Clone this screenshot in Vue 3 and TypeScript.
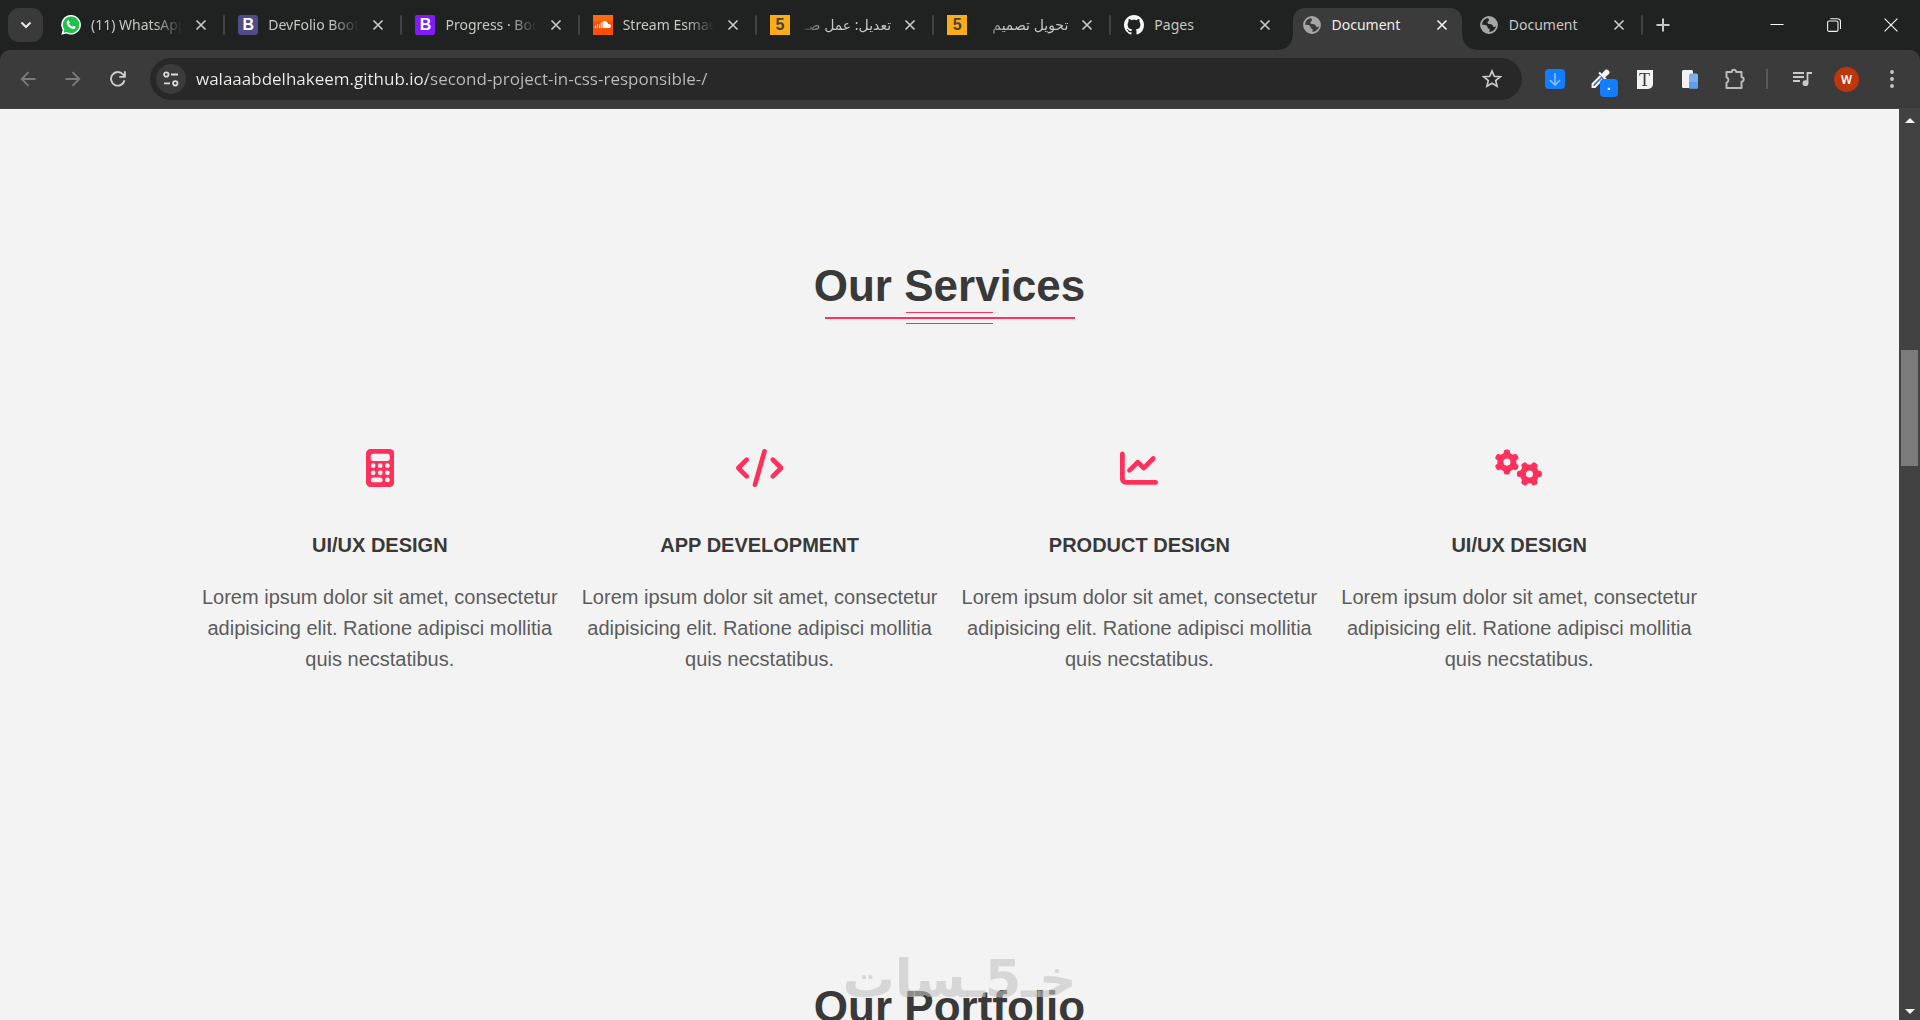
<script setup lang="ts">
import { ref } from 'vue'

type Favicon = 'whatsapp' | 'bootstrap' | 'bootstrap-docs' | 'soundcloud' | 'five' | 'github' | 'globe'

interface Tab {
  title: string
  icon: Favicon
  rtl?: boolean
  fade?: boolean
}

interface Service {
  title: string
  icon: 'calculator' | 'code' | 'chart' | 'gears'
}

const tabs: Tab[] = [
  { title: '(11) WhatsApp', icon: 'whatsapp', fade: true },
  { title: 'DevFolio Boot', icon: 'bootstrap', fade: true },
  { title: 'Progress · Boo', icon: 'bootstrap-docs', fade: true },
  { title: 'Stream Esmae', icon: 'soundcloud', fade: true },
  { title: 'تعديل: عمل صـ', icon: 'five', rtl: true, fade: true },
  { title: 'تحويل تصميم', icon: 'five', rtl: true, fade: true },
  { title: 'Pages', icon: 'github' },
  { title: 'Document', icon: 'globe' },
  { title: 'Document', icon: 'globe' },
]
const activeTab = ref(7)
const address = ref('walaaabdelhakeem.github.io/second-project-in-css-responsible-/')

const services: Service[] = [
  { title: 'UI/UX DESIGN', icon: 'calculator' },
  { title: 'APP DEVELOPMENT', icon: 'code' },
  { title: 'PRODUCT DESIGN', icon: 'chart' },
  { title: 'UI/UX DESIGN', icon: 'gears' },
]
const blurb =
  'Lorem ipsum dolor sit amet, consectetur adipisicing elit. Ratione adipisci mollitia quis necstatibus.'

const gear =
  'M308.5 135.3c7.1-6.3 9.9-16.2 6.2-25c-2.3-5.3-4.8-10.5-7.6-15.5L304 89.4c-3-5-6.3-9.9-9.8-14.6c-5.7-7.6-15.7-10.1-24.7-7.1l-28.2 9.3c-10.7-8.8-23-16-36.2-20.9L199 27.1c-1.9-9.3-9.1-16.7-18.5-17.8C173.9 8.4 167.2 8 160.4 8h-.7c-6.8 0-13.5 .4-20.1 1.2c-9.4 1.1-16.6 8.6-18.5 17.8L115 56.1c-13.3 5-25.5 12.1-36.2 20.9L50.5 67.8c-9-3-19-.5-24.7 7.1c-3.5 4.7-6.8 9.6-9.9 14.6l-3 5.3c-2.8 5-5.3 10.2-7.6 15.6c-3.7 8.7-.9 18.6 6.2 25l22.2 19.8C32.6 161.9 32 168.9 32 176s.6 14.1 1.7 20.9L11.5 216.7c-7.1 6.3-9.9 16.2-6.2 25c2.3 5.3 4.8 10.5 7.6 15.6l3 5.2c3 5.1 6.3 9.9 9.9 14.6c5.7 7.6 15.7 10.1 24.7 7.1l28.2-9.3c10.7 8.8 23 16 36.2 20.9l6.1 29.1c1.9 9.3 9.1 16.7 18.5 17.8c6.7 .8 13.5 1.2 20.4 1.2s13.7-.4 20.4-1.2c9.4-1.1 16.6-8.6 18.5-17.8l6.1-29.1c13.3-5 25.5-12.1 36.2-20.9l28.2 9.3c9 3 19 .5 24.7-7.1c3.5-4.7 6.8-9.5 9.8-14.6l3.1-5.4c2.8-5 5.3-10.2 7.6-15.5c3.7-8.7 .9-18.6-6.2-25l-22.2-19.8c1.1-6.8 1.7-13.8 1.7-20.9s-.6-14.1-1.7-20.9l22.2-19.8zM112 176a48 48 0 1 1 96 0 48 48 0 1 1 -96 0z'
</script>

<template>
  <div class="browser">
    <header class="tabstrip">
      <button class="tab-search" aria-label="Search tabs">
        <svg width="12" height="12" viewBox="0 0 12 12"><path d="M1.500 3.500 6 8l4.500-4.500" fill="none" stroke="#e8e6e3" stroke-width="2.200" /></svg>
      </button>

      <nav class="tabs" aria-label="Tabs">
        <div
          v-for="(tab, i) in tabs"
          :key="i"
          class="tab"
          :class="{ active: i === activeTab, divided: i !== activeTab && i !== activeTab - 1 }"
        >
          <button class="tab-main" @click="activeTab = i">
            <svg v-if="tab.icon === 'whatsapp'" class="favicon" viewBox="0 0 20 20">
              <path d="M10 0a10 9.800 0 1 1-4.700 18.500L.300 19.800l1.400-4.900A9.800 9.800 0 0 1 10 0z" fill="#fff" />
              <path d="M10 1.500a8.300 8.300 0 1 1-4.200 15.400l-3.300.900.900-3.200A8.300 8.300 0 0 1 10 1.500z" fill="#1fc04b" />
              <path d="M6.900 5.500c.400-.300.900-.200 1.100.200l.700 1.600c.100.300 0 .600-.700 1.300.700 1.500 1.800 2.500 3.300 3.100.700-.900.900-1.100 1.300-1l1.700.900c.500.300.200 1.300-.300 1.800-2.800 2.200-8.900-2.400-8.300-6.300.1-.700.700-1.300 1.200-1.600z" fill="#fff" />
            </svg>
            <span v-else-if="tab.icon === 'bootstrap'" class="favicon badge violet-grey">B</span>
            <span v-else-if="tab.icon === 'bootstrap-docs'" class="favicon badge violet">B</span>
            <svg v-else-if="tab.icon === 'soundcloud'" class="favicon" viewBox="0 0 20 20">
              <rect width="20" height="20" fill="#ff4e08" />
              <path d="M0 0h20v6H0z" fill="#ff6a10" />
              <path d="M2.500 10.500v2.500M4.500 9v4M6.500 9.500v3.500M8.300 7.500V13" stroke="#fff" stroke-width="1.100" />
              <path d="M9.500 13V6.600c2.400-1.500 5.200-.200 5.500 2.500 3.600-.5 3.900 3.900.900 3.900z" fill="#fff" />
            </svg>
            <span v-else-if="tab.icon === 'five'" class="favicon badge amber">5</span>
            <svg v-else-if="tab.icon === 'github'" class="favicon" viewBox="0 0 16 16">
              <path fill="#f6f6f6" d="M8 0C3.580 0 0 3.580 0 8c0 3.540 2.290 6.530 5.470 7.590.4.070.550-.170.550-.380 0-.190-.010-.820-.010-1.490-2.010.370-2.530-.490-2.690-.940-.090-.230-.480-.940-.820-1.130-.280-.150-.680-.520-.010-.530.630-.010 1.080.580 1.230.820.720 1.210 1.870.870 2.330.660.070-.520.280-.870.510-1.070-1.780-.2-3.640-.890-3.640-3.950 0-.870.310-1.590.820-2.150-.080-.2-.360-1.020.080-2.120 0 0 .670-.210 2.200.820.640-.180 1.320-.270 2-.270s1.360.090 2 .270c1.530-1.040 2.200-.820 2.200-.820.440 1.100.160 1.920.080 2.120.510.560.820 1.270.820 2.150 0 3.070-1.870 3.750-3.650 3.950.290.250.540.730.540 1.480 0 1.070-.010 1.930-.010 2.200 0 .210.150.460.550.380A8.010 8.010 0 0 0 16 8c0-4.420-3.580-8-8-8z" />
            </svg>
            <svg v-else class="favicon" viewBox="0 0 20 20">
              <circle cx="10" cy="10" r="8" fill="none" stroke="#a9a7a4" stroke-width="1.800" />
              <path d="M2.500 9.500c2.500.2 4.500.5 5.500 1.500s.200 2 1.500 2.500 1.700 1.500.500 4.500C5 18 1.500 14 2.500 9.500zM9.500 2c4-.5 7.500 2.500 8.200 6.500-.500 3-2 4-3 3.500-1.200-.500-.500-2-2-2.500S9 9.500 8.500 8 9.700 6.500 10 5.500 8.500 3.500 9.500 2z" fill="#a3a6a8" />
            </svg>
            <span class="tab-title" :class="{ fade: tab.fade }" :dir="tab.rtl ? 'rtl' : 'ltr'">{{ tab.title }}</span>
          </button>
          <button class="tab-close" aria-label="Close tab">
            <svg width="12" height="12" viewBox="0 0 12 12"><path d="m1.500 1.500 9 9m0-9-9 9" stroke="currentColor" stroke-width="1.700" /></svg>
          </button>
        </div>
      </nav>

      <button class="new-tab" aria-label="New tab">
        <svg width="14" height="14" viewBox="0 0 14 14"><path d="M7 .500v13M.500 7h13" stroke="#c9c7c4" stroke-width="2" /></svg>
      </button>

      <div class="window-controls">
        <button aria-label="Minimize">
          <svg width="14" height="14" viewBox="0 0 14 14"><path d="M.500 6.500h13" stroke="#fff" stroke-width="1" /></svg>
        </button>
        <button aria-label="Restore">
          <svg width="14" height="14" viewBox="0 0 14 14" fill="none" stroke="#f1f1f1" stroke-width="1.100">
            <rect x=".600" y="3" width="10.400" height="10.400" rx="1.500" />
            <path d="M3.200.700h7.300a3 3 0 0 1 3 3V11" />
          </svg>
        </button>
        <button aria-label="Close">
          <svg width="14" height="14" viewBox="0 0 14 14"><path d="m.600.600 12.800 12.800m0-12.800L.600 13.400" stroke="#f1f1f1" stroke-width="1.200" /></svg>
        </button>
      </div>
    </header>

    <div class="toolbar">
      <button class="tool" aria-label="Back">
        <svg width="16" height="16" viewBox="0 0 16 16" fill="none" stroke="#7d7b79" stroke-width="1.800"><path d="M15.500 8H2M8.500 1.200 1.700 8l6.800 6.800" /></svg>
      </button>
      <button class="tool" aria-label="Forward">
        <svg width="16" height="16" viewBox="0 0 16 16" fill="none" stroke="#7d7b79" stroke-width="1.800"><path d="M.500 8H14M7.500 1.200 14.300 8l-6.800 6.800" /></svg>
      </button>
      <button class="tool" aria-label="Reload">
        <svg width="16" height="16" viewBox="0 0 16 16" fill="none" stroke="#cfcdca" stroke-width="1.900"><path d="M14.500 9.200A6.800 6.800 0 1 1 13 3.400l1.800 1.900M14.900.300v5.600H9.300" /></svg>
      </button>

      <div class="omnibox">
        <button class="site-info" aria-label="View site information">
          <svg width="16" height="16" viewBox="0 0 16 16" fill="none" stroke="#dddbd8" stroke-width="1.800">
            <circle cx="3.300" cy="3.500" r="2.200" /><path d="M8 3.500h7M1 12.300h6" /><circle cx="12.300" cy="12.300" r="2.200" />
          </svg>
        </button>
        <input v-model="address" class="address" type="text" aria-label="Address" spellcheck="false" />
        <button class="star" aria-label="Bookmark this tab">
          <svg width="20" height="20" viewBox="0 0 20 20"><path d="m10 2 2.300 5.300 5.900.500-4.500 3.800 1.400 5.700L10 14.300l-5.100 3 1.400-5.700L1.800 7.800l5.900-.500z" fill="none" stroke="#cbc9c6" stroke-width="1.700" /></svg>
        </button>
      </div>

      <button class="tool" aria-label="Downloader">
        <svg width="20" height="20" viewBox="0 0 20 20"><rect width="20" height="20" rx="4" fill="#127dff" /><path d="M10 4v12M5 11l5 5 5-5" fill="none" stroke="#8fc0f3" stroke-width="1.600" /></svg>
      </button>
      <button class="tool picker" aria-label="Color picker">
        <svg width="20" height="20" viewBox="0 0 20 20">
          <path d="M10.500 7 2.500 15v3H5l7.500-8" fill="#3a78c2" stroke="#f4f4f4" stroke-width="1.900" />
          <path d="m8.300 4.300 7.400 7.400 1.500-1.500-2-2 4-3.500c1.500-2-1.700-5.300-3.900-3.900L11.800 4.800l-2-2z" fill="#f4f4f4" />
        </svg>
        <span class="count">·</span>
      </button>
      <button class="tool" aria-label="Font finder">
        <span class="type-page">T</span>
      </button>
      <button class="tool" aria-label="Copy">
        <svg width="18" height="20" viewBox="0 0 18 20"><rect x="1" y="1" width="11" height="18" rx="1.500" fill="#f3f3f6" /><rect x="8" y="4.500" width="9" height="15" rx="1.500" fill="#7bb1e8" /><path d="M8 13h9v5a1.500 1.500 0 0 1-1.500 1.500H8z" fill="#5c9fe6" /></svg>
      </button>
      <button class="tool" aria-label="Extensions">
        <svg width="22" height="22" viewBox="0 0 22 22" fill="none" stroke="#bcbab8" stroke-width="2" stroke-linejoin="round"><path d="M2.500 4h5.300a2.200 2.200 0 0 1 4.400 0H17.500v5.300a2.200 2.200 0 0 1 0 4.400V20h-15v-5.200a3 3 0 0 0 0-5.600z" /></svg>
      </button>
      <span class="tool-divider"></span>
      <button class="tool" aria-label="Media controls">
        <svg width="20" height="16" viewBox="0 0 20 16" fill="none" stroke="#cbc9c6" stroke-width="1.800"><path d="M1 2h11M1 6h11M1 10h7M15.500 12V2H20" /><circle cx="13.500" cy="12.200" r="2.900" fill="#cbc9c6" stroke="none" /></svg>
      </button>
      <button class="tool" aria-label="Profile"><span class="avatar">W</span></button>
      <button class="tool" aria-label="Menu">
        <svg width="4" height="18" viewBox="0 0 4 18" fill="#cbc9c6"><circle cx="2" cy="2" r="1.900" /><circle cx="2" cy="9" r="1.900" /><circle cx="2" cy="16" r="1.900" /></svg>
      </button>
    </div>

    <div class="viewport">
      <main class="page">
        <section class="section">
          <h2 class="heading">Our Services</h2>
          <div class="rule"><i></i><b></b><i></i></div>
          <div class="services">
            <article v-for="(s, i) in services" :key="i" class="service">
              <svg v-if="s.icon === 'calculator'" class="glyph" viewBox="0 0 384 512">
                <path fill-rule="evenodd" d="M64 0C28.700 0 0 28.700 0 64V448c0 35.300 28.700 64 64 64H320c35.300 0 64-28.700 64-64V64c0-35.300-28.700-64-64-64H64zM96 64H288c17.700 0 32 14.300 32 32v32c0 17.700-14.300 32-32 32H96c-17.700 0-32-14.300-32-32V96c0-17.700 14.300-32 32-32zm32 160a32 32 0 1 1 -64 0 32 32 0 1 1 64 0zM96 352a32 32 0 1 1 0-64 32 32 0 1 1 0 64zM64 416c0-17.700 14.300-32 32-32h96c17.700 0 32 14.300 32 32s-14.300 32-32 32H96c-17.700 0-32-14.300-32-32zM192 256a32 32 0 1 1 0-64 32 32 0 1 1 0 64zm32 64a32 32 0 1 1 -64 0 32 32 0 1 1 64 0zm64-64a32 32 0 1 1 0-64 32 32 0 1 1 0 64zm32 64a32 32 0 1 1 -64 0 32 32 0 1 1 64 0zM288 448a32 32 0 1 1 0-64 32 32 0 1 1 0 64z" />
              </svg>
              <svg v-else-if="s.icon === 'code'" class="glyph" viewBox="0 0 640 512">
                <path d="M392.800 1.200c-17-4.900-34.700 5-39.600 22l-128 448c-4.900 17 5 34.700 22 39.600s34.700-5 39.600-22l128-448c4.900-17-5-34.700-22-39.600zm80.600 120.100c-12.500 12.500-12.500 32.800 0 45.300L562.700 256l-89.400 89.400c-12.500 12.500-12.500 32.800 0 45.300s32.800 12.500 45.300 0l112-112c12.500-12.500 12.500-32.800 0-45.300l-112-112c-12.500-12.500-32.800-12.500-45.300 0zm-306.700 0c-12.500-12.500-32.800-12.500-45.300 0l-112 112c-12.500 12.500-12.500 32.800 0 45.300l112 112c12.500 12.500 32.800 12.500 45.300 0s12.500-32.800 0-45.300L77.300 256l89.400-89.400c12.500-12.500 12.500-32.800 0-45.300z" />
              </svg>
              <svg v-else-if="s.icon === 'chart'" class="glyph" viewBox="0 0 512 512">
                <path d="M64 64c0-17.700-14.300-32-32-32S0 46.300 0 64V400c0 44.200 35.800 80 80 80H480c17.700 0 32-14.300 32-32s-14.300-32-32-32H80c-8.800 0-16-7.200-16-16V64zm406.600 86.600c12.500-12.500 12.500-32.800 0-45.300s-32.800-12.500-45.300 0L320 210.700l-57.400-57.400c-12.500-12.500-32.800-12.500-45.300 0l-112 112c-12.500 12.500-12.500 32.800 0 45.300s32.800 12.500 45.300 0L240 221.300l57.400 57.400c12.500 12.500 32.800 12.500 45.300 0l128-128z" />
              </svg>
              <svg v-else class="glyph" viewBox="0 0 640 512">
                <path fill-rule="evenodd" :d="gear" />
                <path fill-rule="evenodd" :d="gear" transform="translate(464 336) rotate(90) translate(-160 -176)" />
              </svg>
              <h3>{{ s.title }}</h3>
              <p>{{ blurb }}</p>
            </article>
          </div>
        </section>

        <section class="section">
          <h2 class="heading">Our Portfolio</h2>
        </section>

        <div class="watermark" dir="rtl" lang="ar">خـ5ـسات</div>
      </main>

      <div class="scrollbar" aria-hidden="true">
        <span class="arrow up"></span>
        <span class="thumb"></span>
        <span class="arrow down"></span>
      </div>
    </div>
  </div>
</template>

<style>
body {
  margin: 0;
  overflow: hidden;
}
</style>

<style scoped>
.browser {
  display: flex;
  flex-direction: column;
  height: 100vh;
  background: #202221;
  font-family: 'Noto Sans', 'DejaVu Sans', sans-serif;
}

button {
  display: flex;
  align-items: center;
  justify-content: center;
  flex: none;
  padding: 0;
  border: 0;
  background: none;
  color: inherit;
  font: inherit;
}

svg {
  display: block;
  flex: none;
}

/* Tab strip */
.tabstrip {
  display: flex;
  align-items: center;
  flex: none;
  height: 50px;
  padding-left: 8px;
  color: #c9c7c4;
}

.tab-search {
  width: 35px;
  height: 34px;
  margin-right: 5px;
  border-radius: 11px;
  background: #3a3a3a;
}

.tabs {
  display: flex;
  flex: 1;
  height: 50px;
  min-width: 0;
}

.tab {
  position: relative;
  display: flex;
  align-items: center;
  flex: 1 1 0;
  min-width: 0;
  padding: 0 14px 0 13px;
}

.tab.divided::after {
  content: '';
  position: absolute;
  right: 0;
  top: 15px;
  width: 2px;
  height: 20px;
  border-radius: 1px;
  background: #424242;
}

.tab.active {
  color: #f0eeea;
}

.tab.active::before {
  content: '';
  position: absolute;
  inset: 8px 4px 0;
  border-radius: 12px 12px 0 0;
  background: #3b3b3b;
}

/* Curved feet that join the active tab to the toolbar */
.tab.active::after {
  content: '';
  position: absolute;
  right: -10px;
  bottom: 0;
  left: -10px;
  height: 14px;
  background:
    radial-gradient(circle at 0 0, transparent 13px, #3b3b3b 14px) left bottom / 14px 14px no-repeat,
    radial-gradient(circle at 100% 0, transparent 13px, #3b3b3b 14px) right bottom / 14px 14px no-repeat;
  pointer-events: none;
}

.tab-main {
  position: relative;
  flex: 1;
  justify-content: flex-start;
  gap: 10px;
  min-width: 0;
  height: 34px;
  text-align: left;
}

.favicon {
  flex: none;
  width: 20px;
  height: 20px;
}

.badge {
  font: bold 16px/20px 'Liberation Sans', Arial, sans-serif;
  text-align: center;
}

.violet-grey {
  border-radius: 3px;
  background: #504c86;
  color: #fff;
}

.violet {
  border-radius: 2px;
  background: #811bf8;
  color: #fff;
}

.amber {
  background: #fbad18;
  color: #4a4040;
}

.tab-title {
  flex: 1;
  min-width: 0;
  overflow: hidden;
  font-size: 14px;
  line-height: 24px;
  white-space: nowrap;
}

.tab-title.fade {
  mask-image: linear-gradient(90deg, #000 70%, transparent);
}

.tab-title.fade[dir='rtl'] {
  text-align: right;
  mask-image: linear-gradient(270deg, #000 70%, transparent);
}

.tab-close {
  position: relative;
  width: 20px;
  height: 20px;
  margin-left: 9px;
}

.new-tab {
  width: 40px;
  height: 34px;
  margin-right: 65px;
}

.window-controls {
  display: flex;
  padding-right: 1px;
}

.window-controls button {
  width: 57px;
  height: 50px;
}

/* Toolbar */
.toolbar {
  display: flex;
  align-items: center;
  flex: none;
  height: 58px;
  padding: 0 6px 0 5px;
  border-bottom: 1px solid #454343;
  border-radius: 10px 10px 0 0;
  background: #3b3b3b;
}

.tool {
  width: 45px;
  height: 40px;
}

.omnibox {
  display: flex;
  align-items: center;
  flex: 1;
  min-width: 0;
  height: 42px;
  margin: 0 10px;
  padding: 0 15px 0 6px;
  box-sizing: border-box;
  border-radius: 21px;
  background: #282828;
}

.site-info {
  width: 30px;
  height: 30px;
  border-radius: 50%;
  background: #3b3b3b;
}

.address {
  flex: 1;
  min-width: 0;
  height: 30px;
  margin-left: 10px;
  padding: 0;
  border: 0;
  outline: 0;
  background: linear-gradient(90deg, #f2f0ed 231px, #bdbcc0 231px);
  background-clip: text;
  color: transparent;
  font: 17px/30px 'Open Sans', 'Noto Sans', sans-serif;
}

.star {
  width: 30px;
  height: 30px;
}

.picker {
  position: relative;
}

.count {
  position: absolute;
  top: 20px;
  left: 23px;
  width: 18px;
  height: 18px;
  border-radius: 4px;
  background: #127dff;
  color: #fff;
  font: bold 14px/20px 'Liberation Sans', Arial, sans-serif;
  text-align: center;
}

.type-page {
  width: 16px;
  height: 19px;
  border-bottom-right-radius: 5px;
  background: #f3f3f3;
  color: #3a3a3a;
  font: 18px/20px 'Liberation Serif', 'Times New Roman', serif;
  text-align: center;
}

.tool-divider {
  flex: none;
  width: 2px;
  height: 20px;
  margin: 0 11px 0 9px;
  background: #5c5b5a;
}

.avatar {
  width: 25px;
  height: 25px;
  border-radius: 50%;
  background: #bf360c;
  color: #fff;
  font: 500 13px/25px Roboto, sans-serif;
  text-align: center;
}

/* Page */
.viewport {
  display: flex;
  flex: 1;
  min-height: 0;
}

.page {
  position: relative;
  flex: 1;
  min-width: 0;
  overflow: hidden;
  background: #f3f3f3;
  color: #393939;
  font-family: 'Liberation Sans', Arial, sans-serif;
}

.section {
  padding: 152px 10% 155px;
}

.heading {
  margin: 0;
  font-size: 44px;
  line-height: 50px;
  text-align: center;
}

.rule {
  display: flex;
  flex-direction: column;
  align-items: center;
  gap: 4px;
  margin: 1px 0 125px;
}

.rule i {
  width: 87px;
  height: 1px;
  background: #ff305c;
}

.rule b {
  width: 250px;
  height: 2px;
  background: #ff305c;
}

.services {
  display: grid;
  grid-template-columns: repeat(4, 1fr);
}

.service {
  display: flex;
  flex-direction: column;
  align-items: center;
  text-align: center;
}

.glyph {
  height: 38px;
  fill: #ff305c;
}

.service h3 {
  margin: 46px 0 25px;
  font-size: 20px;
  line-height: 24px;
}

.service p {
  margin: 0;
  padding: 0 10px;
  color: #5c5c5c;
  font-size: 20px;
  line-height: 31px;
}

.watermark {
  position: absolute;
  bottom: 0;
  left: 0;
  right: 0;
  padding-left: 20px;
  color: rgba(195, 195, 195, 0.6);
  font: bold 52px/82px 'DejaVu Sans', sans-serif;
  text-align: center;
  pointer-events: none;
}

/* Scrollbar */
.scrollbar {
  display: flex;
  flex-direction: column;
  align-items: center;
  flex: none;
  width: 21px;
  padding: 9px 0 6px;
  box-sizing: border-box;
  background: #424242;
}

.arrow {
  width: 0;
  height: 0;
  border: 5px solid transparent;
}

.arrow.up {
  border-top: 0;
  border-bottom-color: #f3f3f3;
}

.arrow.down {
  margin-top: auto;
  border-bottom: 0;
  border-top-color: #f3f3f3;
}

.thumb {
  width: 17px;
  height: 116px;
  margin-top: 227px;
  background: #7b7b7b;
}
</style>
